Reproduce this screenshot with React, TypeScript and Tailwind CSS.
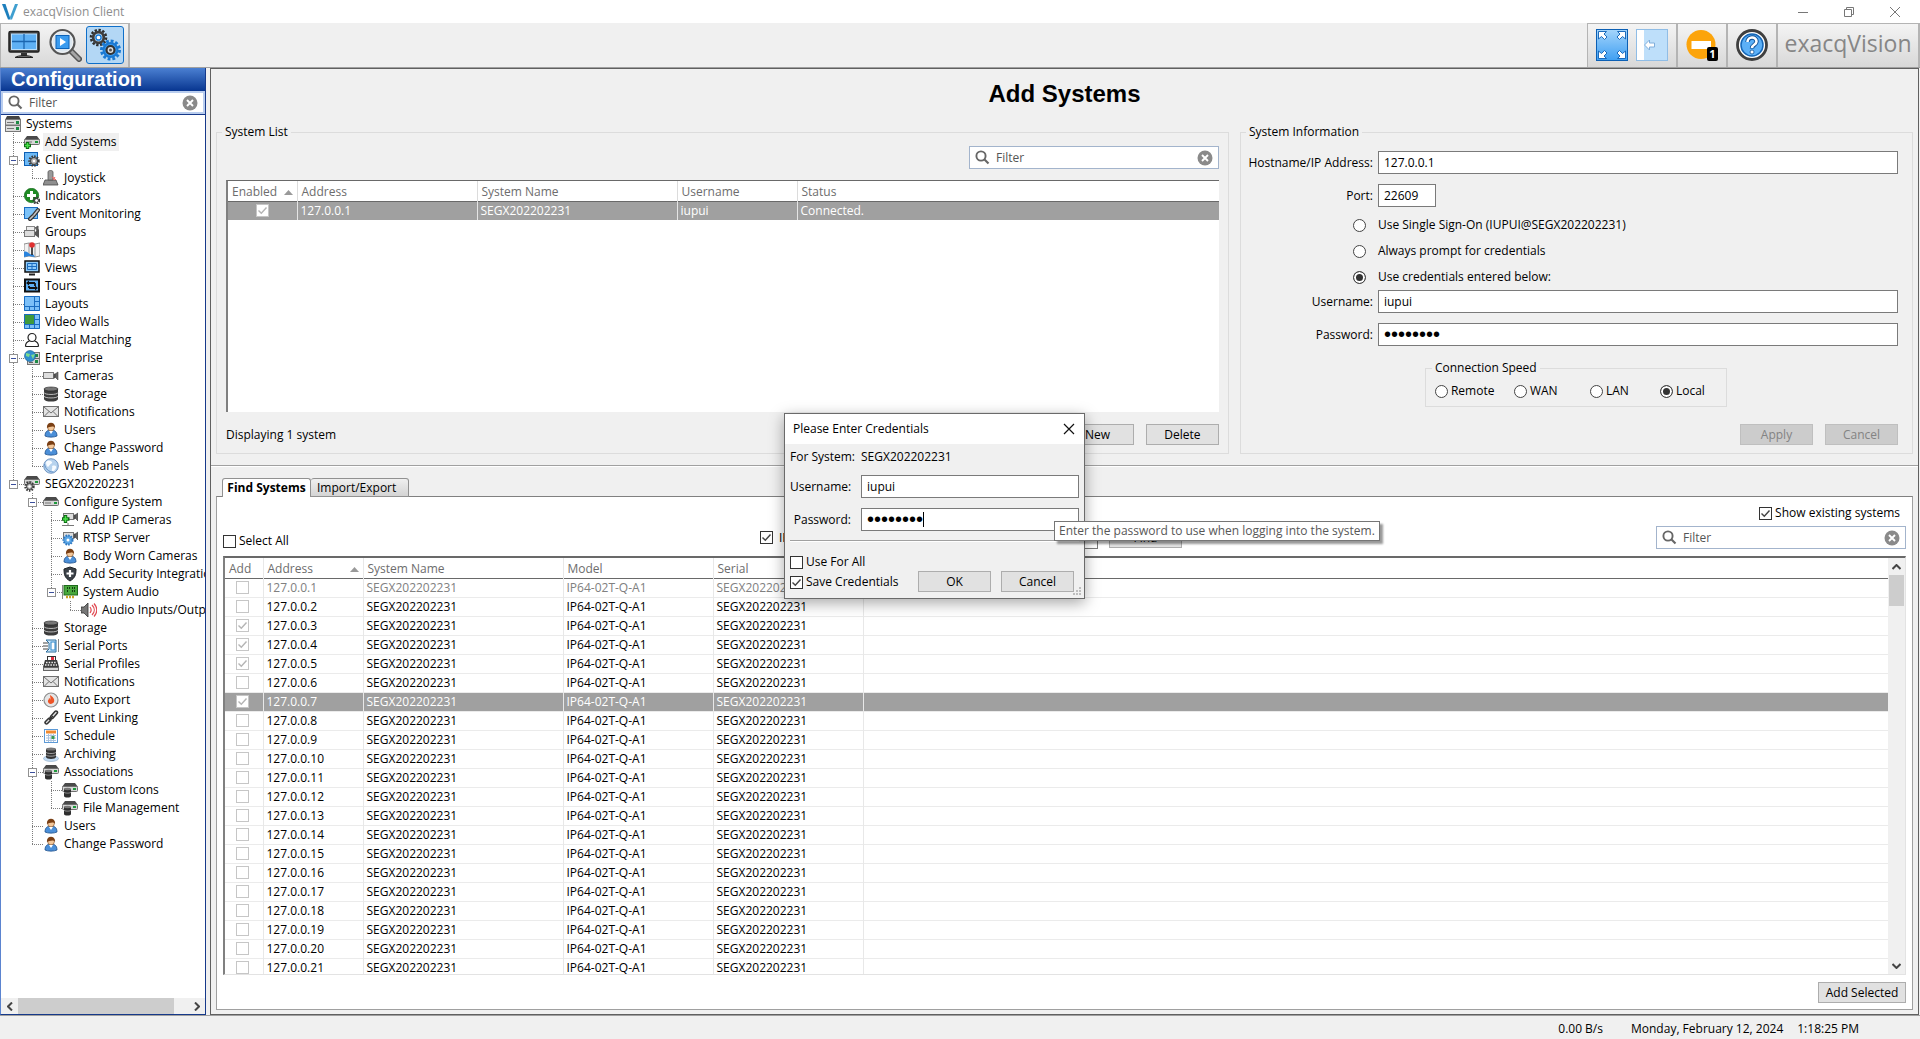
import { useState } from "react"
import type { ReactNode } from "react"
import clsx from "clsx"

// Tree guides, one letter per indent column:
// v = line passing through, t = branch, l = last branch,
// m = branch with toggle, e = last branch with toggle, . = empty
type TreeNode = {
  label: string
  icon: string
  guides: string
}

const treeNodes: TreeNode[] = [
  { label: "Systems", icon: "servers", guides: "" },
  { label: "Add Systems", icon: "serverAdd", guides: "t" },
  { label: "Client", icon: "client", guides: "m" },
  { label: "Joystick", icon: "joystick", guides: "vl" },
  { label: "Indicators", icon: "indicators", guides: "t" },
  { label: "Event Monitoring", icon: "eventMonitoring", guides: "t" },
  { label: "Groups", icon: "groups", guides: "t" },
  { label: "Maps", icon: "maps", guides: "t" },
  { label: "Views", icon: "views", guides: "t" },
  { label: "Tours", icon: "tours", guides: "t" },
  { label: "Layouts", icon: "layouts", guides: "t" },
  { label: "Video Walls", icon: "videoWalls", guides: "t" },
  { label: "Facial Matching", icon: "face", guides: "t" },
  { label: "Enterprise", icon: "enterprise", guides: "m" },
  { label: "Cameras", icon: "camera", guides: "vt" },
  { label: "Storage", icon: "storage", guides: "vt" },
  { label: "Notifications", icon: "mail", guides: "vt" },
  { label: "Users", icon: "user", guides: "vt" },
  { label: "Change Password", icon: "user", guides: "vt" },
  { label: "Web Panels", icon: "globe", guides: "vl" },
  { label: "SEGX202202231", icon: "serverGear", guides: "e" },
  { label: "Configure System", icon: "server", guides: ".m" },
  { label: "Add IP Cameras", icon: "cameraAdd", guides: ".vt" },
  { label: "RTSP Server", icon: "rtsp", guides: ".vt" },
  { label: "Body Worn Cameras", icon: "user", guides: ".vt" },
  { label: "Add Security Integrations", icon: "shield", guides: ".vt" },
  { label: "System Audio", icon: "soundCard", guides: ".ve" },
  { label: "Audio Inputs/Outputs", icon: "speaker", guides: ".v.l" },
  { label: "Storage", icon: "storage", guides: ".t" },
  { label: "Serial Ports", icon: "serialPort", guides: ".t" },
  { label: "Serial Profiles", icon: "register", guides: ".t" },
  { label: "Notifications", icon: "mail", guides: ".t" },
  { label: "Auto Export", icon: "export", guides: ".t" },
  { label: "Event Linking", icon: "link", guides: ".t" },
  { label: "Schedule", icon: "schedule", guides: ".t" },
  { label: "Archiving", icon: "archive", guides: ".t" },
  { label: "Associations", icon: "serverDisk", guides: ".m" },
  { label: "Custom Icons", icon: "serverDisk", guides: ".vt" },
  { label: "File Management", icon: "serverDisk", guides: ".vl" },
  { label: "Users", icon: "user", guides: ".t" },
  { label: "Change Password", icon: "user", guides: ".l" },
]

const foundSystems = Array.from({ length: 21 }, (_, i) => ({
  address: `127.0.0.${i + 1}`,
  name: "SEGX202202231",
  model: "IP64-02T-Q-A1",
  serial: "SEGX202202231",
  added: [3, 4, 5, 7].includes(i + 1),
}))

// Shared icon parts
const serverBox = (y: number) => (
  <>
    <path d={`M3 ${y}h10l3 4H0z`} fill="#4a4a4a" />
    <rect x="0.5" y={y + 3.5} width="15" height="5" rx="1" fill="#d6d6d6" stroke="#6e6e6e" />
    <path d={`M2 ${y + 6}h6`} stroke="#777" />
    <rect x="11" y={y + 5} width="3" height="2" fill="#1e9a3c" />
  </>
)

const cameraBody = (
  <>
    <rect x="0.5" y="4.5" width="10" height="6" fill="#dedede" stroke="#777" />
    <path d="M11 6l1 0v4h-1zM12 6l3-2v8l-3-3z" fill="#666" stroke="#444" strokeWidth="0.6" />
  </>
)

const gearSmall = (cx: number, cy: number, r: number) => (
  <>
    <circle cx={cx} cy={cy} r={r} fill="none" stroke="#3c3c3c" strokeWidth="2.4" strokeDasharray="1.5 1.1" />
    <circle cx={cx} cy={cy} r={r - 1} fill="#b4b4b4" stroke="#3c3c3c" />
    <circle cx={cx} cy={cy} r={1.3} fill="#fff" />
  </>
)

const diskStack = (
  <>
    <path d="M1 3v10c0 3.4 14 3.4 14 0V3z" fill="#3b3b3b" />
    <ellipse cx="8" cy="3" rx="7" ry="2" fill="#777" stroke="#222" strokeWidth="0.6" />
    <path d="M1 6.5c0 2.6 14 2.6 14 0M1 10c0 2.6 14 2.6 14 0" stroke="#c8c8c8" strokeWidth="0.9" fill="none" />
  </>
)

const icons: Record<string, ReactNode> = {
  servers: (
    <>
      <path d="M2 0h12l2 4H0z" fill="#444" />
      <rect x="0.5" y="3.5" width="15" height="5.5" fill="#ddd" stroke="#777" />
      <rect x="0.5" y="9.5" width="15" height="6" fill="#ddd" stroke="#777" />
      <path d="M2 6.5h7M2 12.5h7" stroke="#777" />
      <path d="M11 5h3v3h-3zM11 11h3v3h-3z" fill="#1e8a45" />
    </>
  ),
  serverAdd: (
    <>
      {serverBox(2)}
      <path d="M3.5 8v7M0 11.5h7" stroke="#0b6b12" strokeWidth="3.4" />
      <path d="M3.5 9v5M1 11.5h5" stroke="#4be04b" strokeWidth="1.6" />
    </>
  ),
  client: (
    <>
      <rect x="0.5" y="0.5" width="13" height="13" fill="#6db9f5" stroke="#0c5fb5" />
      {gearSmall(10, 9, 4.5)}
    </>
  ),
  joystick: (
    <>
      <path d="M2 10h11l2 5H0z" fill="#8f8f8f" stroke="#4a4a4a" strokeWidth="0.8" />
      <path d="M5 2c0-2 5-2 5 0v8H5z" fill="#9a9a9a" stroke="#555" strokeWidth="0.8" />
      <path d="M9 7l4 3M10 10l2-3" stroke="#f0605c" />
    </>
  ),
  indicators: (
    <>
      <circle cx="7.5" cy="7.5" r="7.2" fill="#1f8b24" stroke="#0c5f12" strokeWidth="0.6" />
      <path d="M7.5 3v9M3 7.5h9" stroke="#fff" strokeWidth="3" />
      {gearSmall(12.5, 12.5, 2.8)}
    </>
  ),
  eventMonitoring: (
    <>
      <rect x="0.5" y="1.5" width="13" height="11" fill="#7cc2f8" stroke="#1a6cc0" />
      <path d="M6 13l3-3M10 9l4-5" stroke="#333" strokeWidth="4" strokeLinecap="round" />
      <path d="M6 13l3-3M10 9l4-5" stroke="#c4c4c4" strokeWidth="1.6" strokeLinecap="round" />
    </>
  ),
  groups: (
    <>
      <rect x="2.5" y="2.5" width="8" height="5" fill="#eee" stroke="#888" />
      <path d="M11 4l3-2v8" fill="#666" stroke="#555" />
      <rect x="0.5" y="6.5" width="10" height="6" fill="#ddd" stroke="#777" />
      <path d="M11 8l4-3v9l-4-3z" fill="#555" />
    </>
  ),
  maps: (
    <>
      <path d="M0 2l5-1 6 1 5-1v13l-5 1-6-1-5 1z" fill="#f2f2f2" stroke="#777" strokeWidth="0.8" />
      <path d="M5 1v13M11 2v13" stroke="#999" />
      <path d="M0 10c4-2 5 4 9 2l2 3-6-1-5 1z" fill="#2a84dd" />
      <path d="M8 4v9" stroke="#222" strokeWidth="1.6" />
      <circle cx="8" cy="3" r="2.8" fill="#e03030" />
    </>
  ),
  views: (
    <>
      <rect x="1" y="1" width="14" height="11" fill="#8fcbfa" stroke="#111" strokeWidth="1.5" />
      <path d="M3.5 3.5h9v6h-9zM8 3v7M3 6.5h10" stroke="#1a6cc0" fill="none" />
      <path d="M5 14.5h6" stroke="#222" strokeWidth="2" />
    </>
  ),
  tours: (
    <>
      <rect x="1" y="1.5" width="14" height="12" fill="#5eb0f4" stroke="#111" strokeWidth="2" />
      <path d="M3 5h8M11 5v3M13 10H5M5 10V8" stroke="#111" strokeWidth="1.8" fill="none" />
      <path d="M5 2.5L2 5l3 2.5zM11 7.5l3 2.5-3 2.5z" fill="#111" />
    </>
  ),
  layouts: (
    <>
      <rect x="0" y="0" width="16" height="15" fill="#7cc0f8" />
      <path d="M10.5 0v15M0 10.5h16M10 5.5h6M5.5 10v5M.5.5h15v14H.5z" stroke="#1a6cc0" fill="none" />
    </>
  ),
  videoWalls: (
    <>
      <rect x="0" y="0" width="16" height="15" fill="#7cc0f8" />
      <rect x="0" y="0" width="10" height="10" fill="#3f9a3c" />
      <path d="M10.5 0v15M0 10.5h16M10 5.5h6M5.5 10v5M.5.5h15v14H.5z" stroke="#1a6cc0" fill="none" />
    </>
  ),
  face: (
    <>
      <circle cx="8" cy="5.5" r="4" fill="none" stroke="#222" strokeWidth="1.2" />
      <path
        d="M1.5 14.5c0-4 2-5 4-5.5M14.5 14.5c0-4-2-5-4-5.5M1.5 14.5h13"
        fill="none"
        stroke="#222"
        strokeWidth="1.2"
      />
    </>
  ),
  enterprise: (
    <>
      <rect x="3.5" y="2.5" width="12" height="12" fill="#d5d5d5" stroke="#777" />
      <path d="M11 4h3v3h-3zM11 10h3v3h-3z" fill="#1e8a45" />
      <path d="M4 8.5h11M5 12.5h4" stroke="#666" />
      <circle cx="6" cy="6" r="5.5" fill="#2f8fd0" stroke="#155a8c" strokeWidth="0.6" />
      <path d="M2 3l4 1-1 3-3-1zM7 5l4-1-2 5z" fill="#7ddc8c" />
    </>
  ),
  camera: cameraBody,
  storage: diskStack,
  mail: (
    <>
      <rect x="0.5" y="2.5" width="15" height="10" fill="#e4e4e4" stroke="#707070" />
      <path d="M1 3l7 6 7-6M1 12.5l5-5M15 12.5l-5-5" stroke="#707070" fill="none" />
    </>
  ),
  user: (
    <>
      <path d="M2 14c0-5 3-6 6-6s6 1 6 6c-3 1.5-9 1.5-12 0z" fill="#4b8fd8" stroke="#20508c" strokeWidth="0.8" />
      <circle cx="8" cy="5.5" r="3.4" fill="#f3c79a" stroke="#7a4a22" strokeWidth="0.6" />
      <path d="M4 6c-1-7 9-7 8 0-1-3-6-1-8 0z" fill="#7a3f14" />
      <path d="M6 9l2 3 2-3z" fill="#fff" />
    </>
  ),
  globe: (
    <>
      <circle cx="8" cy="8" r="7.3" fill="#b7d3ee" stroke="#5b84b8" strokeWidth="0.8" />
      <path d="M3 4c3-3 5-1 6 0s-2 2-3 4-3 0-3-4zM9 8c3-1 5 0 4 2s-3 4-4 3 1-3 0-5z" fill="#f7fbff" />
      <path d="M1.5 6c1 5 4 8 9 8" stroke="#5f8fc8" fill="none" />
    </>
  ),
  serverGear: (
    <>
      {serverBox(0)}
      {gearSmall(5.5, 10.5, 4)}
    </>
  ),
  server: serverBox(3),
  cameraAdd: (
    <>
      <g transform="translate(1 -3)">{cameraBody}</g>
      <path d="M0 13.5h12M6 11v3" stroke="#777" />
      <path d="M3.5 3v8M0 7h7.5" stroke="#0b6b12" strokeWidth="3.4" />
      <path d="M3.5 4v6M1 7h5" stroke="#4be04b" strokeWidth="1.6" />
    </>
  ),
  rtsp: (
    <>
      <g transform="translate(1 -2)">{cameraBody}</g>
      <circle cx="6" cy="10" r="4.5" fill="#5aa6e6" stroke="#2f78c0" strokeWidth="2" strokeDasharray="1.6 1" />
      <circle cx="6" cy="10" r="1.5" fill="#fff" />
    </>
  ),
  shield: (
    <>
      <path d="M8 1l6 2c0 6-1 9-6 12C3 12 2 9 2 3z" fill="#3b4148" stroke="#1f2328" />
      <path d="M8 4v7M4.5 7.5h7" stroke="#fff" strokeWidth="2.2" />
    </>
  ),
  soundCard: (
    <>
      <path d="M0.5 1v14" stroke="#888" />
      <rect x="2" y="1.5" width="13.5" height="9.5" fill="#48a83c" stroke="#1f6a1c" />
      <path d="M5 4h3M10 4h3M5 7h2M10 7h3" stroke="#123f10" strokeWidth="2" strokeDasharray="1 1" />
      <path d="M4 13h9" stroke="#c9a227" strokeWidth="2.5" strokeDasharray="2 1" />
    </>
  ),
  speaker: (
    <>
      <path d="M0 5h3l4-4v14l-4-4H0z" fill="#777" stroke="#333" strokeWidth="0.8" />
      <path
        d="M9 5c1.5 2 1.5 4 0 6M11 3c3 3 3 7 0 10M13 1.5c3.5 4 3.5 9 0 13"
        stroke="#e04a52"
        strokeWidth="1.2"
        fill="none"
      />
    </>
  ),
  serialPort: (
    <>
      <path d="M0 5h5M0 8h5M0 11h5" stroke="#444" />
      <path d="M3 2h10v12H3l3-3V5z" fill="#cfe8fb" stroke="#2b6e9e" />
      <rect x="8" y="4" width="4" height="8" fill="#fff" stroke="#2b86c9" />
      <path d="M15.5 1v13" stroke="#888" />
    </>
  ),
  register: (
    <>
      <rect x="4.5" y="0.5" width="8" height="4" fill="#fff" stroke="#333" />
      <path d="M8 1h3v3H8z" fill="#e03040" />
      <path d="M2 4h12l2 7H0z" fill="#3c3c3c" />
      <path d="M3 6.5h10M2 9h12" stroke="#eee" strokeDasharray="1.5 1.2" strokeWidth="1.4" />
      <rect x="0.5" y="11.5" width="15" height="3" fill="#d6d6d6" stroke="#666" />
    </>
  ),
  export: (
    <>
      <circle cx="8" cy="8" r="7" fill="#e6e6e6" stroke="#8f8f8f" strokeWidth="1.2" />
      <path d="M7 3c3 2 5 4 4 7-1 2-5 3-6 0-.5-2 1-2 1-4 1 0 1 1 1 2 1-2 0-3 0-5z" fill="#ee5426" />
    </>
  ),
  link: (
    <>
      <path d="M3.5 12.5l3-3M9 7l4-4.5" stroke="#333" strokeWidth="4.4" strokeLinecap="round" />
      <path d="M3.5 12.5l3-3M9 7l4-4.5" stroke="#ddd" strokeWidth="1.4" strokeLinecap="round" />
      <path d="M6 10l4-4" stroke="#333" strokeWidth="1.5" />
    </>
  ),
  schedule: (
    <>
      <rect x="1.5" y="1.5" width="13" height="13" fill="#fff" stroke="#5d9ad6" />
      <path d="M3 4h10" stroke="#f08a30" strokeWidth="3" />
      <path d="M3 7.5h10M3 10h10M3 12.5h10M5.5 6v8M8 6v8M10.5 6v8" stroke="#a9c2de" />
      <rect x="8.5" y="8" width="3" height="3" fill="#3c9a50" />
    </>
  ),
  archive: (
    <>
      <ellipse cx="8" cy="12.5" rx="7.5" ry="3" fill="#c3dcf3" stroke="#8cabc9" strokeWidth="0.6" />
      <path d="M3 3v8c0 2.5 10 2.5 10 0V3z" fill="#333" />
      <ellipse cx="8" cy="3" rx="5" ry="1.6" fill="#777" />
      <path d="M3 6c0 2 10 2 10 0M3 8.7c0 2 10 2 10 0" stroke="#bbb" fill="none" strokeWidth="0.8" />
    </>
  ),
  serverDisk: (
    <>
      {serverBox(1)}
      <path d="M2 7v7c0 2 7 2 7 0V7z" fill="#2f2f2f" />
      <ellipse cx="5.5" cy="7" rx="3.5" ry="1.2" fill="#777" />
      <path d="M2 10c0 1.5 7 1.5 7 0" stroke="#aaa" fill="none" strokeWidth="0.8" />
    </>
  ),
}

function TreeGuide({ type }: { type: string }) {
  const vEnd = type === "l" || type === "e" ? 9 : 18
  const hasToggle = type === "m" || type === "e"

  return (
    <svg width="19" height="18" className="shrink-0" shapeRendering="crispEdges" fill="none">
      {type !== "." && <path d={`M8.5 0V${vEnd}`} stroke="#7d7d7d" strokeDasharray="1 1" />}
      {type !== "." && type !== "v" && <path d="M8 9.5H19" stroke="#7d7d7d" strokeDasharray="1 1" />}
      {hasToggle && (
        <>
          <rect x="4.5" y="5.5" width="8" height="8" fill="#fff" stroke="#919191" />
          <path d="M6 9.5h5" stroke="#3b4f9c" />
        </>
      )}
    </svg>
  )
}

function TreeRow({ node, selected }: { node: TreeNode; selected: boolean }) {
  return (
    <li className="flex h-[18px] items-center">
      {node.guides.split("").map((g, i) => (
        <TreeGuide key={i} type={g} />
      ))}
      <svg width="16" height="16" viewBox="0 0 16 16" className="shrink-0" fill="none">
        {icons[node.icon]}
      </svg>
      <a
        href="#"
        className={clsx("ml-[3px] h-[18px] px-0.5 leading-[17px] whitespace-nowrap", selected && "bg-[#f0f0f0]")}
      >
        {node.label}
      </a>
    </li>
  )
}

function FilterBox({ label, className }: { label: string; className?: string }) {
  return (
    <div className={clsx("flex items-center bg-white px-[5px]", className)}>
      <svg width="15" height="15" viewBox="0 0 15 15" fill="none" className="shrink-0">
        <circle cx="6" cy="6" r="4.6" stroke="#666" strokeWidth="1.9" />
        <path d="M9.5 9.5l4 4" stroke="#666" strokeWidth="2.2" />
      </svg>
      <input
        type="text"
        aria-label={label}
        placeholder="Filter"
        className="ml-[6px] min-w-0 flex-1 bg-transparent outline-none placeholder:text-[#555]"
      />
      <button aria-label="Clear filter" className="shrink-0">
        <svg width="16" height="16" viewBox="0 0 16 16" fill="none">
          <circle cx="8" cy="8" r="7.5" fill="#8a8a8a" />
          <path d="M5 5l6 6M11 5l-6 6" stroke="#fff" strokeWidth="1.9" />
        </svg>
      </button>
    </div>
  )
}

type CheckProps = {
  label?: string
  ariaLabel?: string
  defaultChecked?: boolean
  muted?: boolean
}

function Check({ label, ariaLabel, defaultChecked, muted }: CheckProps) {
  return (
    <label className="flex items-center gap-[3px] whitespace-nowrap">
      <span className="grid">
        <input
          type="checkbox"
          aria-label={ariaLabel}
          defaultChecked={defaultChecked}
          className={clsx(
            "peer col-start-1 row-start-1 size-[13px] appearance-none border bg-white",
            muted ? "border-[#c6c6c6]" : "border-[#333]"
          )}
        />
        <svg
          viewBox="0 0 13 13"
          fill="none"
          className="pointer-events-none invisible col-start-1 row-start-1 size-[13px] peer-checked:visible"
        >
          <path d="M2.5 6.5l2.8 2.8L10.5 3.5" stroke={muted ? "#b5b5b5" : "#444"} strokeWidth="1.4" />
        </svg>
      </span>
      {label}
    </label>
  )
}

const radioClass =
  "size-[13px] shrink-0 appearance-none rounded-full border border-[#444] bg-white checked:bg-[#333] checked:shadow-[inset_0_0_0_2px_white]"
const buttonClass =
  "h-[21px] border border-[#adadad] bg-[#e1e1e1] text-center leading-[19px] whitespace-nowrap disabled:border-[#bfbfbf] disabled:bg-[#cccccc] disabled:text-[#838383]"
const inputClass = "h-[23px] border border-[#7a7a7a] bg-white px-[5px] outline-none"
const passwordFont = "font-['Liberation_Sans',sans-serif] text-[20px]"
const toolGroup =
  "flex items-center border-t border-r-2 border-t-[#b4b4b4] border-r-[#b4b4b4] bg-linear-to-b from-[#f4f4f4] to-[#d8d8d8] pb-px"

function SortArrow() {
  return (
    <svg width="9" height="5" viewBox="0 0 9 5">
      <path d="M4.5 0L9 5H0z" fill="#999" />
    </svg>
  )
}

function TitleBar() {
  return (
    <header className="flex h-[23px] items-center bg-white pl-[2px] text-[#8e8e8e]">
      <svg width="16" height="16" viewBox="0 0 16 16">
        <path d="M0 0h3.5l4 12 1 3.5H6z" fill="#1d7fbd" />
        <path d="M16 0h-3L8 13l.5 2.5H10z" fill="#3f9fd0" />
      </svg>
      <h1 className="ml-[5px]">exacqVision Client</h1>
      <div className="ml-auto flex items-center gap-[34px] pr-[19px] text-[#777]">
        <button aria-label="Minimize">
          <svg width="12" height="12" fill="none" stroke="currentColor">
            <path d="M1 6.5h10" />
          </svg>
        </button>
        <button aria-label="Restore">
          <svg width="12" height="12" fill="none" stroke="currentColor">
            <path d="M1.5 3.5h7v7h-7zM3.5 3V1.5h7v7H9" />
          </svg>
        </button>
        <button aria-label="Close">
          <svg width="12" height="12" fill="none" stroke="currentColor">
            <path d="M1 1l10 10M11 1L1 11" />
          </svg>
        </button>
      </div>
    </header>
  )
}

function Toolbar() {
  return (
    <nav className="flex h-[44px] shrink-0 items-stretch justify-between">
      <div className={clsx(toolGroup, "border-l border-l-[#b4b4b4] pr-[4px] pl-[4px]")}>
        <button aria-label="Live" className="flex w-[38px] justify-center">
          <svg width="32" height="30" viewBox="0 0 32 30" fill="none">
            <rect x="1" y="1.5" width="30" height="20.5" rx="1.5" fill="#4b4b4b" stroke="#1e1e1e" strokeWidth="1.5" />
            <rect x="3.5" y="4" width="25" height="15.5" fill="#5fb1f5" stroke="#b9defb" />
            <path d="M16 4v15M4 11.5h24" stroke="#1b66b0" strokeWidth="1.3" />
            <path d="M13 23h6v3h-6z" fill="#333" />
            <path d="M7 27.5c3-2.5 15-2.5 18 0z" fill="#777" stroke="#222" />
          </svg>
        </button>
        <button aria-label="Search" className="flex w-[43px] justify-center">
          <svg width="34" height="34" viewBox="0 0 34 34" fill="none">
            <path d="M23 23l8 8" stroke="#555" strokeWidth="6" strokeLinecap="round" />
            <path d="M23 23l8 8" stroke="#a5a5a5" strokeWidth="3" strokeLinecap="round" />
            <circle cx="14.5" cy="14" r="12" fill="#dce7f0" stroke="#555" strokeWidth="2.2" />
            <circle cx="14.5" cy="14" r="10.3" stroke="#f2f2f2" strokeWidth="1" />
            <rect x="8" y="7.5" width="13" height="13" fill="#3a9bef" stroke="#0d63b8" />
            <path d="M12 10l6 4-6 4z" fill="#fff" />
          </svg>
        </button>
        <button
          aria-label="Configuration"
          className="flex size-[38px] items-center justify-center rounded-[3px] border border-[#0f6fc9] bg-[#b3d7f5]"
        >
          <svg width="34" height="34" viewBox="0 0 34 34" fill="none">
            <circle cx="10.5" cy="9.5" r="7.5" stroke="#2e2e2e" strokeWidth="2.6" strokeDasharray="2.3 1.6" />
            <circle cx="10.5" cy="9.5" r="5.3" fill="#c8e2f8" stroke="#3d3d3d" strokeWidth="2.8" />
            <circle cx="10.5" cy="9.5" r="2.6" fill="#fff" stroke="#1c7fdc" strokeWidth="1.5" />
            <circle cx="22.5" cy="22" r="9" stroke="#1a79d3" strokeWidth="3" strokeDasharray="2.8 1.9" />
            <circle cx="22.5" cy="22" r="7" fill="#3b9bf0" stroke="#1a79d3" strokeWidth="2" />
            <circle cx="22.5" cy="22" r="4" fill="#ddd" stroke="#333" strokeWidth="2.2" />
            <circle cx="22.5" cy="22" r="1.5" fill="#555" />
          </svg>
        </button>
      </div>

      <div className="flex">
        <div className={clsx(toolGroup, "w-[91px] justify-center gap-2 border-l border-l-[#b4b4b4]")}>
          <button aria-label="Full screen">
            <svg width="32" height="32" viewBox="0 0 32 32" fill="none">
              <defs>
                <linearGradient id="screenBlue" x1="0" y1="0" x2="0" y2="1">
                  <stop offset="0" stopColor="#a5d5fb" />
                  <stop offset="1" stopColor="#3f9ff2" />
                </linearGradient>
              </defs>
              <rect x="0.5" y="0.5" width="31" height="31" fill="url(#screenBlue)" stroke="#0b5fb4" />
              <g fill="#fff" stroke="#0b5fb4" strokeWidth="0.9">
                <path d="M2.5 2.5h8l-2.5 2.5 3 3-2.5 2.5-3-3-3 2.5z" />
                <path d="M29.5 2.5h-8l2.5 2.5-3 3 2.5 2.5 3-3 3 2.5z" />
                <path d="M2.5 29.5h8l-2.5-2.5 3-3-2.5-2.5-3 3-3-2.5z" />
                <path d="M29.5 29.5h-8l2.5-2.5-3-3 2.5-2.5 3 3 3-2.5z" />
              </g>
            </svg>
          </button>
          <button aria-label="Hide panel">
            <svg width="32" height="32" viewBox="0 0 32 32" fill="none">
              <rect x="0.5" y="0.5" width="31" height="31" fill="#bedffa" stroke="#90bde6" />
              <path d="M1 1h7v30H1z" fill="#fff" />
              <path d="M8.5 16l5-5v3h5v4h-5v3z" fill="#fff" stroke="#80aedb" />
            </svg>
          </button>
        </div>
        <div className={clsx(toolGroup, "w-[50px] justify-center")}>
          <button aria-label="Notifications, 1" className="relative">
            <svg width="32" height="32" viewBox="0 0 32 32">
              <circle cx="15" cy="15.5" r="14.5" fill="#fca40b" />
              <rect x="5.5" y="12" width="19.5" height="8" fill="#fff" />
            </svg>
            <span className="absolute right-0 bottom-0 h-[14px] w-[11px] rounded-xs bg-black text-[11px] leading-[14px] font-bold text-white">
              1
            </span>
          </button>
        </div>
        <div className={clsx(toolGroup, "w-[50px] justify-center")}>
          <button aria-label="Help">
            <svg width="32" height="32" viewBox="0 0 32 32" fill="none">
              <circle cx="16" cy="16" r="14.5" fill="#fff" stroke="#3f3f3f" strokeWidth="2.8" />
              <circle cx="16" cy="16" r="11" fill="#5cb0f7" stroke="#1567b8" strokeWidth="1.5" />
              <path d="M11.5 13c0-6 9-6 9-.5 0 3.5-4.5 3-4.5 7" stroke="#0d4f94" strokeWidth="4.4" />
              <path d="M11.5 13c0-6 9-6 9-.5 0 3.5-4.5 3-4.5 6.5" stroke="#fff" strokeWidth="2.6" />
              <circle cx="16" cy="23" r="2" fill="#fff" stroke="#0d4f94" strokeWidth="0.8" />
            </svg>
          </button>
        </div>
        <div
          className={clsx(toolGroup, "w-[142px] items-start justify-center pt-[4px] text-[23px] leading-[30px] text-[#868686]")}
        >
          exacqVision
        </div>
      </div>
    </nav>
  )
}

function Sidebar() {
  const [selected] = useState("Add Systems")

  return (
    <aside className="mr-[4px] flex w-[206px] shrink-0 flex-col border-x border-b border-[#16398a] border-l-[#5b84d0] bg-white">
      <h2 className="h-[23px] bg-linear-to-b from-[#4b80d2] to-[#073590] pl-[10px] font-['Liberation_Sans',sans-serif] text-[20px] leading-[23px] font-bold text-white">
        Configuration
      </h2>
      <FilterBox label="Filter configuration" className="h-[23px] border-2 border-[#b9cdee]" />
      <ul className="min-h-0 flex-1 overflow-hidden border-t border-[#16398a] pl-[4px]">
        {treeNodes.map((node, i) => (
          <TreeRow key={i} node={node} selected={node.label === selected} />
        ))}
      </ul>
      <div className="flex h-[16px] shrink-0 items-center bg-[#f0f0f0]">
        <button aria-label="Scroll left" className="flex w-[17px] justify-center">
          <svg width="6" height="9" fill="none" stroke="#444" strokeWidth="2">
            <path d="M5 .5l-4 4 4 4" />
          </svg>
        </button>
        <div className="flex h-full flex-1">
          <div className="h-full w-[92%] bg-[#cdcdcd]" />
        </div>
        <button aria-label="Scroll right" className="flex w-[17px] justify-center">
          <svg width="6" height="9" fill="none" stroke="#444" strokeWidth="2">
            <path d="M1 .5l4 4-4 4" />
          </svg>
        </button>
      </div>
    </aside>
  )
}

function SystemList() {
  const head = "border-r border-[#dcdcdc] px-[4px] pt-[3px] text-left font-normal"
  const cell = "border-r border-[#e5e5e5] px-[3px]"

  return (
    <fieldset className="flex min-w-0 flex-col border border-[#dcdcdc] px-[9px] pb-[8px]">
      <legend className="-ml-[4px] px-[3px] leading-[20px]">System List</legend>
      <FilterBox label="Filter systems" className="mt-[4px] h-[23px] w-[250px] self-end border border-[#a3b4cc]" />
      <div className="mt-[11px] h-[232px] border-t border-l-2 border-t-[#696969] border-l-[#808080] bg-white">
        <table className="w-full table-fixed border-collapse">
          <colgroup>
            <col className="w-[69px]" />
            <col className="w-[180px]" />
            <col className="w-[200px]" />
            <col className="w-[120px]" />
            <col />
          </colgroup>
          <thead>
            <tr className="h-[20px] border-b border-[#696969] text-[#6d6d6d]">
              <th className={head}>
                <span className="flex items-center justify-between">
                  Enabled <SortArrow />
                </span>
              </th>
              <th className={head}>Address</th>
              <th className={head}>System Name</th>
              <th className={head}>Username</th>
              <th className="px-[4px] pt-[3px] text-left font-normal">Status</th>
            </tr>
          </thead>
          <tbody>
            <tr className="h-[19px] bg-[#a0a0a0] text-white">
              <td className={cell}>
                <span className="flex justify-center">
                  <Check ariaLabel="Enabled" defaultChecked muted />
                </span>
              </td>
              <td className={cell}>127.0.0.1</td>
              <td className={cell}>SEGX202202231</td>
              <td className={cell}>iupui</td>
              <td className="px-[3px]">Connected.</td>
            </tr>
          </tbody>
        </table>
      </div>
      <div className="mt-[12px] flex items-center">
        <p>Displaying 1 system</p>
        <button className={clsx(buttonClass, "ml-auto w-[73px]")}>New</button>
        <button className={clsx(buttonClass, "ml-[12px] w-[73px]")}>Delete</button>
      </div>
    </fieldset>
  )
}

function SystemInformation() {
  const row = "grid grid-cols-[132px_minmax(0,1fr)] items-center gap-x-[5px]"
  const modes = [
    "Use Single Sign-On (IUPUI@SEGX202202231)",
    "Always prompt for credentials",
    "Use credentials entered below:",
  ]

  return (
    <fieldset className="flex min-w-0 flex-col border border-[#dcdcdc] pr-[14px] pb-[8px]">
      <legend className="ml-[5px] px-[3px] leading-[20px]">System Information</legend>
      <div className={clsx(row, "mt-[9px]")}>
        <label htmlFor="host" className="text-right">Hostname/IP Address:</label>
        <input id="host" className={inputClass} defaultValue="127.0.0.1" />
      </div>
      <div className={clsx(row, "mt-[10px]")}>
        <label htmlFor="port" className="text-right">Port:</label>
        <input id="port" className={clsx(inputClass, "w-[58px]")} defaultValue="22609" />
      </div>
      <div className="mt-[5px]">
        {modes.map((mode, i) => (
          <div key={mode} className={clsx(row, "h-[26px]")}>
            <input
              type="radio"
              name="mode"
              id={`mode-${i}`}
              defaultChecked={i === 2}
              className={clsx(radioClass, "mr-[7px] justify-self-end")}
            />
            <label htmlFor={`mode-${i}`}>{mode}</label>
          </div>
        ))}
      </div>
      <div className={row}>
        <label htmlFor="username" className="text-right">Username:</label>
        <input id="username" className={inputClass} defaultValue="iupui" />
      </div>
      <div className={clsx(row, "mt-[10px]")}>
        <label htmlFor="password" className="text-right">Password:</label>
        <input id="password" type="password" className={clsx(inputClass, passwordFont)} defaultValue="password" />
      </div>
      <fieldset className="mt-[12px] ml-[184px] h-[49px] w-[302px] border border-[#dcdcdc] pl-[9px]">
        <legend className="-ml-[3px] px-[3px] leading-[20px]">Connection Speed</legend>
        <div className="mt-[5px] grid grid-cols-[79px_76px_70px_auto]">
          {["Remote", "WAN", "LAN", "Local"].map((speed) => (
            <label key={speed} className="flex items-center gap-[3px]">
              <input type="radio" name="speed" defaultChecked={speed === "Local"} className={radioClass} />
              {speed}
            </label>
          ))}
        </div>
      </fieldset>
      <div className="mt-auto flex justify-end gap-[12px]">
        <button disabled className={clsx(buttonClass, "w-[73px]")}>Apply</button>
        <button disabled className={clsx(buttonClass, "w-[73px]")}>Cancel</button>
      </div>
    </fieldset>
  )
}

function FindSystems() {
  const cell = "border-r border-[#e8e8e8] px-[3px]"
  const head = "border-r border-[#e8e8e8] px-[4px] pt-[3px] text-left font-normal"

  return (
    <section className="flex min-h-0 flex-1 flex-col">
      <div className="z-10 -mb-px ml-[6px] flex h-[19px] items-end" role="tablist">
        <button
          role="tab"
          aria-selected="true"
          className="h-[19px] w-[89px] rounded-t-[3px] border border-b-0 border-[#919191] bg-white font-bold"
        >
          Find Systems
        </button>
        <button
          role="tab"
          aria-selected="false"
          className="h-[19px] w-[98px] rounded-t-[3px] border border-l-0 border-[#919191] bg-linear-to-b from-[#f0f0f0] to-[#d4d4d4] pl-[6px] text-left"
        >
          Import/Export
        </button>
      </div>
      <div className="flex min-h-0 flex-1 flex-col border border-[#a0a0a0] border-t-[#808080] bg-white px-[6px] pb-[6px]">
        <div className="flex h-[59px] shrink-0 items-end pb-[7px]">
          <div className="w-[537px]">
            <Check label="Select All" />
          </div>
          <div className="flex w-[422px] items-center">
            <Check ariaLabel="Use IP address" defaultChecked />
            <label htmlFor="range" className="ml-[6px] w-[80px]">IP Address:</label>
            <input id="range" className={clsx(inputClass, "min-w-0 flex-1")} />
            <button className={clsx(buttonClass, "ml-[11px] w-[73px]")}>Find</button>
          </div>
          <div className="ml-auto flex flex-col items-end">
            <div className="mb-[5px] pr-[6px]">
              <Check label="Show existing systems" defaultChecked />
            </div>
            <FilterBox label="Filter found systems" className="h-[23px] w-[250px] border border-[#a3b4cc]" />
          </div>
        </div>
        <div className="flex min-h-0 flex-1 border-t-2 border-r border-b border-l-2 border-t-[#696969] border-r-[#e3e3e3] border-b-[#e3e3e3] border-l-[#808080]">
          <div className="min-w-0 flex-1 overflow-hidden">
            <table className="w-full table-fixed border-collapse">
              <colgroup>
                <col className="w-[38px]" />
                <col className="w-[100px]" />
                <col className="w-[200px]" />
                <col className="w-[150px]" />
                <col className="w-[150px]" />
                <col />
              </colgroup>
              <thead>
                <tr className="h-[20px] border-b border-[#696969] text-[#6d6d6d]">
                  <th className={head}>Add</th>
                  <th className={head}>
                    <span className="flex items-center justify-between">
                      Address <SortArrow />
                    </span>
                  </th>
                  <th className={head}>System Name</th>
                  <th className={head}>Model</th>
                  <th className="px-[4px] pt-[3px] text-left font-normal">Serial</th>
                  <th />
                </tr>
              </thead>
              <tbody>
                {foundSystems.map((system, i) => (
                  <tr
                    key={system.address}
                    className={clsx(
                      "h-[19px] border-b border-[#ebebeb]",
                      i === 0 && "text-[#808080]",
                      i === 6 && "bg-[#a0a0a0] text-white"
                    )}
                  >
                    <td className="border-r border-[#e8e8e8] pr-[2px]">
                      <span className="flex justify-center">
                        <Check ariaLabel={`Add ${system.address}`} defaultChecked={system.added} muted />
                      </span>
                    </td>
                    <td className={cell}>{system.address}</td>
                    <td className={cell}>{system.name}</td>
                    <td className={cell}>{system.model}</td>
                    <td className={cell}>{system.serial}</td>
                    <td />
                  </tr>
                ))}
              </tbody>
            </table>
          </div>
          <div className="flex w-[17px] shrink-0 flex-col items-center bg-[#f0f0f0]">
            <button aria-label="Scroll up" className="flex h-[17px] items-center">
              <svg width="9" height="6" fill="none" stroke="#444" strokeWidth="2">
                <path d="M.5 5l4-4 4 4" />
              </svg>
            </button>
            <div className="h-[31px] w-[15px] bg-[#cdcdcd]" />
            <button aria-label="Scroll down" className="mt-auto flex h-[17px] items-center">
              <svg width="9" height="6" fill="none" stroke="#444" strokeWidth="2">
                <path d="M.5 1l4 4 4-4" />
              </svg>
            </button>
          </div>
        </div>
        <button className={clsx(buttonClass, "mt-[7px] w-[88px] self-end")}>Add Selected</button>
      </div>
    </section>
  )
}

function CredentialsDialog() {
  const row = "grid grid-cols-[61px_minmax(0,1fr)] items-center gap-x-[10px]"

  return (
    <div
      role="dialog"
      aria-label="Please Enter Credentials"
      className="absolute top-[413px] left-[784px] z-20 w-[301px] border border-[#6a6a6a] bg-[#f0f0f0] shadow-[0_4px_14px_rgba(0,0,0,0.35)]"
    >
      <div className="flex h-[30px] items-center justify-between bg-white pr-[9px] pl-[8px]">
        <h2>Please Enter Credentials</h2>
        <button aria-label="Close dialog">
          <svg width="12" height="12" fill="none" stroke="#111" strokeWidth="1.2">
            <path d="M1 1l10 10M11 1L1 11" />
          </svg>
        </button>
      </div>
      <div className="relative px-[5px] pb-[6px]">
        <div className={clsx(row, "h-[26px]")}>
          <span className="text-right whitespace-nowrap">For System:</span>
          <span>SEGX202202231</span>
        </div>
        <div className={clsx(row, "mt-[5px]")}>
          <label htmlFor="dlg-user" className="text-right">Username:</label>
          <input id="dlg-user" className={inputClass} defaultValue="iupui" />
        </div>
        <div className={clsx(row, "mt-[10px]")}>
          <label htmlFor="dlg-pass" className="text-right">Password:</label>
          <div className="relative flex">
            <input
              id="dlg-pass"
              type="password"
              className={clsx(inputClass, passwordFont, "min-w-0 flex-1 border-[#0f6cbd]")}
              defaultValue="password"
            />
            <span className="absolute top-[4px] left-[62px] h-[15px] w-px bg-black" />
          </div>
        </div>
        <div className="mt-[9px] border-t border-b border-t-[#a0a0a0] border-b-white" />
        <div className="mt-[10px] flex items-end">
          <div className="flex flex-col">
            <div className="flex h-[20px] items-center">
              <Check label="Use For All" />
            </div>
            <div className="flex h-[20px] items-center">
              <Check label="Save Credentials" defaultChecked />
            </div>
          </div>
          <div className="ml-auto flex gap-[10px] pr-[5px]">
            <button className={clsx(buttonClass, "w-[73px]")}>OK</button>
            <button className={clsx(buttonClass, "w-[73px]")}>Cancel</button>
          </div>
        </div>
        <svg width="9" height="9" className="absolute right-[2px] bottom-[2px]" fill="#bdbdbd">
          <path d="M6 0h2v2H6zM3 3h2v2H3zM6 3h2v2H6zM0 6h2v2H0zM3 6h2v2H3zM6 6h2v2H6z" />
        </svg>
      </div>
    </div>
  )
}

export default function App() {
  return (
    <div className="relative flex h-screen flex-col overflow-hidden bg-[#f0f0f0] font-['Open_Sans',sans-serif] text-[12px] leading-[16px] text-black">
      <TitleBar />
      <Toolbar />
      <div className="flex min-h-0 flex-1 border-t border-b border-[#a0a0a0] pr-px">
        <Sidebar />
        <main className="flex min-w-0 flex-1 flex-col border border-[#606060] pb-[4px]">
          <h1 className="h-[53px] shrink-0 text-center font-['Liberation_Sans',sans-serif] text-[24px] leading-[50px] font-bold">
            Add Systems
          </h1>
          <div className="grid h-[332px] shrink-0 grid-cols-[301fr_200fr] gap-[11px] px-[5px]">
            <SystemList />
            <SystemInformation />
          </div>
          <div className="mt-[11px] mb-[11px] border-t border-b border-t-[#a0a0a0] border-b-white" />
          <div className="flex min-h-0 flex-1 flex-col px-[5px]">
            <FindSystems />
          </div>
        </main>
      </div>
      <footer className="flex h-[23px] shrink-0 items-center justify-end pt-[3px] pr-[61px]">
        <span>0.00 B/s</span>
        <span className="ml-[28px]">Monday, February 12, 2024</span>
        <span className="ml-[14px]">1:18:25 PM</span>
      </footer>

      <CredentialsDialog />
      <div
        role="tooltip"
        className="absolute top-[521px] left-[1054px] z-30 border border-[#767676] bg-white px-[4px] leading-[18px] whitespace-nowrap text-[#575757] shadow-[3px_3px_2px_rgba(0,0,0,0.4)]"
      >
        Enter the password to use when logging into the system.
      </div>
    </div>
  )
}
